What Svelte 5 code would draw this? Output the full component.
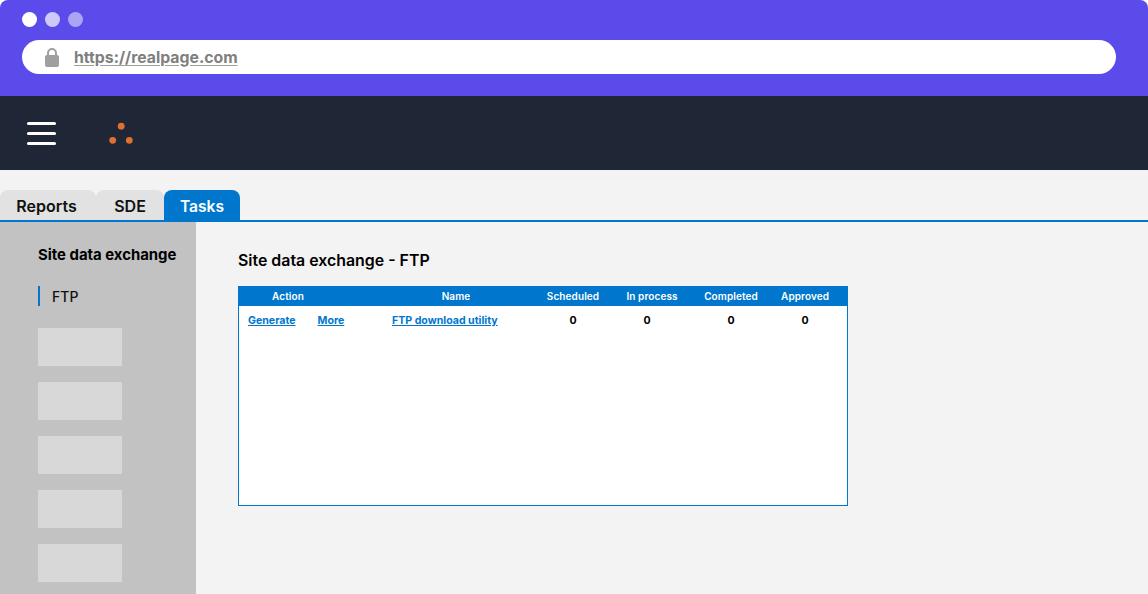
<script>
  const tabs = ['Reports', 'SDE', 'Tasks']
  const placeholders = [1, 2, 3, 4, 5]
  const columns = ['Scheduled', 'In process', 'Completed', 'Approved']
</script>

<div class="page">
  <header class="chrome">
    <div class="dots">
      <span class="dot"></span>
      <span class="dot second"></span>
      <span class="dot third"></span>
    </div>
    <div class="url">
      <svg class="lock" width="16" height="20" viewBox="0 0 16 20">
        <path d="M4 9V6a4 4 0 0 1 8 0v3" fill="none" stroke="#9f9f9f" stroke-width="2" />
        <rect x="1" y="8" width="14" height="12" rx="2" fill="#9f9f9f" />
      </svg>
      <span class="address">https://realpage.com</span>
    </div>
  </header>

  <div class="appbar">
    <div class="burger"><span></span><span></span><span></span></div>
    <svg class="logo" width="26" height="24" viewBox="0 0 26 24">
      <circle cx="13.2" cy="5.2" r="3.4" fill="#e0702f" />
      <circle cx="4.7" cy="19.3" r="3.4" fill="#e0702f" />
      <circle cx="21.3" cy="19.3" r="3.4" fill="#e0702f" />
    </svg>
  </div>

  <nav class="tabs">
    {#each tabs as tab}
      <div class="tab {tab.toLowerCase()}" class:active={tab === 'Tasks'}>{tab}</div>
    {/each}
  </nav>

  <div class="body">
    <aside class="side">
      <h3>Site data exchange</h3>
      <div class="side-item">FTP</div>
      <div class="stack">
        {#each placeholders as p}
          <div class="ph"></div>
        {/each}
      </div>
    </aside>

    <main class="content">
      <h2>Site data exchange - FTP</h2>
      <div class="table">
        <div class="row head">
          <div class="h-action">Action</div>
          <div class="h-name">Name</div>
          {#each columns as col}
            <div class="c-num">{col}</div>
          {/each}
        </div>
        <div class="row data">
          <div class="links">
            <a href="#generate">Generate</a>
            <a href="#more">More</a>
          </div>
          <div><a href="#ftp">FTP download utility</a></div>
          {#each columns as col}
            <div class="c-num">0</div>
          {/each}
        </div>
      </div>
    </main>
  </div>
</div>

<style>
  :global(body) {
    background: #fff;
  }

  .page {
    width: 1148px;
    height: 594px;
    overflow: hidden;
    font-family: Inter, "Liberation Sans", sans-serif;
    background: #f3f3f3;
    border-radius: 8px 8px 0 0;
    display: flex;
    flex-direction: column;
  }

  .chrome {
    height: 96px;
    box-sizing: border-box;
    padding: 12px 32px 0 22px;
    background: #5a4bea;
  }

  .dots {
    display: flex;
    gap: 8px;
  }

  .dot {
    width: 15px;
    height: 15px;
    border-radius: 50%;
    background: #fff;
  }

  .second {
    background: #cdc9f9;
  }

  .third {
    background: #aca5f6;
  }

  .url {
    margin-top: 13px;
    height: 34px;
    border-radius: 17px;
    background: #fff;
    display: flex;
    align-items: center;
    padding-left: 22px;
  }

  .lock {
    margin-right: 14px;
    margin-top: -1px;
    flex: none;
  }

  .address {
    font-size: 15.8px;
    font-weight: 700;
    color: #7f7f7f;
    text-decoration: underline;
    text-decoration-color: #9f9f9f;
    text-underline-offset: 2px;
  }

  .appbar {
    height: 74px;
    background: #1f2737;
    display: flex;
    align-items: center;
    padding-left: 27px;
  }

  .burger {
    width: 29px;
    display: flex;
    flex-direction: column;
    gap: 7px;
  }

  .burger span {
    height: 3px;
    border-radius: 2px;
    background: #fff;
  }

  .logo {
    margin-left: 52px;
  }

  .tabs {
    margin-top: 20px;
    height: 32px;
    box-sizing: border-box;
    border-bottom: 2px solid #0077cc;
    display: flex;
  }

  .tab {
    height: 30px;
    line-height: 33px;
    text-align: center;
    font-size: 16px;
    font-weight: 600;
    color: #111;
    background: #e2e2e2;
    border-radius: 8px 8px 0 0;
  }

  .reports {
    width: 96px;
    padding-right: 3px;
    box-sizing: border-box;
  }

  .sde {
    width: 68px;
  }

  .tasks {
    width: 76px;
    font-size: 15.6px;
  }

  .active {
    background: #0077cc;
    color: #fff;
  }

  .body {
    flex: 1;
    display: flex;
    min-height: 0;
  }

  .side {
    width: 196px;
    box-sizing: border-box;
    padding: 25px 0 0 38px;
    background: #c2c2c2;
  }

  .side h3 {
    margin: 0;
    font-size: 14.9px;
    line-height: 17px;
    font-weight: 700;
    color: #000;
    white-space: nowrap;
  }

  .side-item {
    margin-top: 22px;
    height: 20px;
    line-height: 21px;
    padding-left: 12px;
    border-left: 2px solid #0077cc;
    font-size: 14px;
    font-weight: 500;
    color: #111;
  }

  .stack {
    margin-top: 22px;
    display: flex;
    flex-direction: column;
    gap: 16px;
  }

  .ph {
    width: 84px;
    height: 38px;
    flex: none;
    background: #d8d8d8;
  }

  .content {
    flex: 1;
    padding: 29px 0 0 42px;
  }

  .content h2 {
    margin: 0;
    font-size: 15.9px;
    line-height: 19px;
    font-weight: 600;
    color: #000;
  }

  .table {
    margin-top: 16px;
    width: 610px;
    height: 220px;
    box-sizing: border-box;
    border: 1px solid #0077cc;
    background: #fff;
  }

  .row {
    display: grid;
    grid-template-columns: 153px 141px 80px 68px 100px 48px;
    font-size: 10px;
    font-weight: 600;
    letter-spacing: 0.01em;
    white-space: nowrap;
  }

  .head {
    height: 19px;
    line-height: 19px;
    background: #0077cc;
    color: #fff;
  }

  .h-action {
    width: 98px;
    text-align: center;
  }

  .h-name {
    width: 128px;
    text-align: center;
  }

  .head .c-num:nth-child(4) {
    transform: translateX(5px);
  }

  .data {
    padding-top: 8px;
    line-height: 13px;
    font-size: 10.6px;
    font-weight: 700;
    letter-spacing: 0;
    color: #000;
  }

  .links {
    display: flex;
    gap: 22px;
    padding-left: 9px;
  }

  .c-num {
    text-align: center;
  }

  a {
    color: #0077cc;
    text-decoration: underline;
  }
</style>
